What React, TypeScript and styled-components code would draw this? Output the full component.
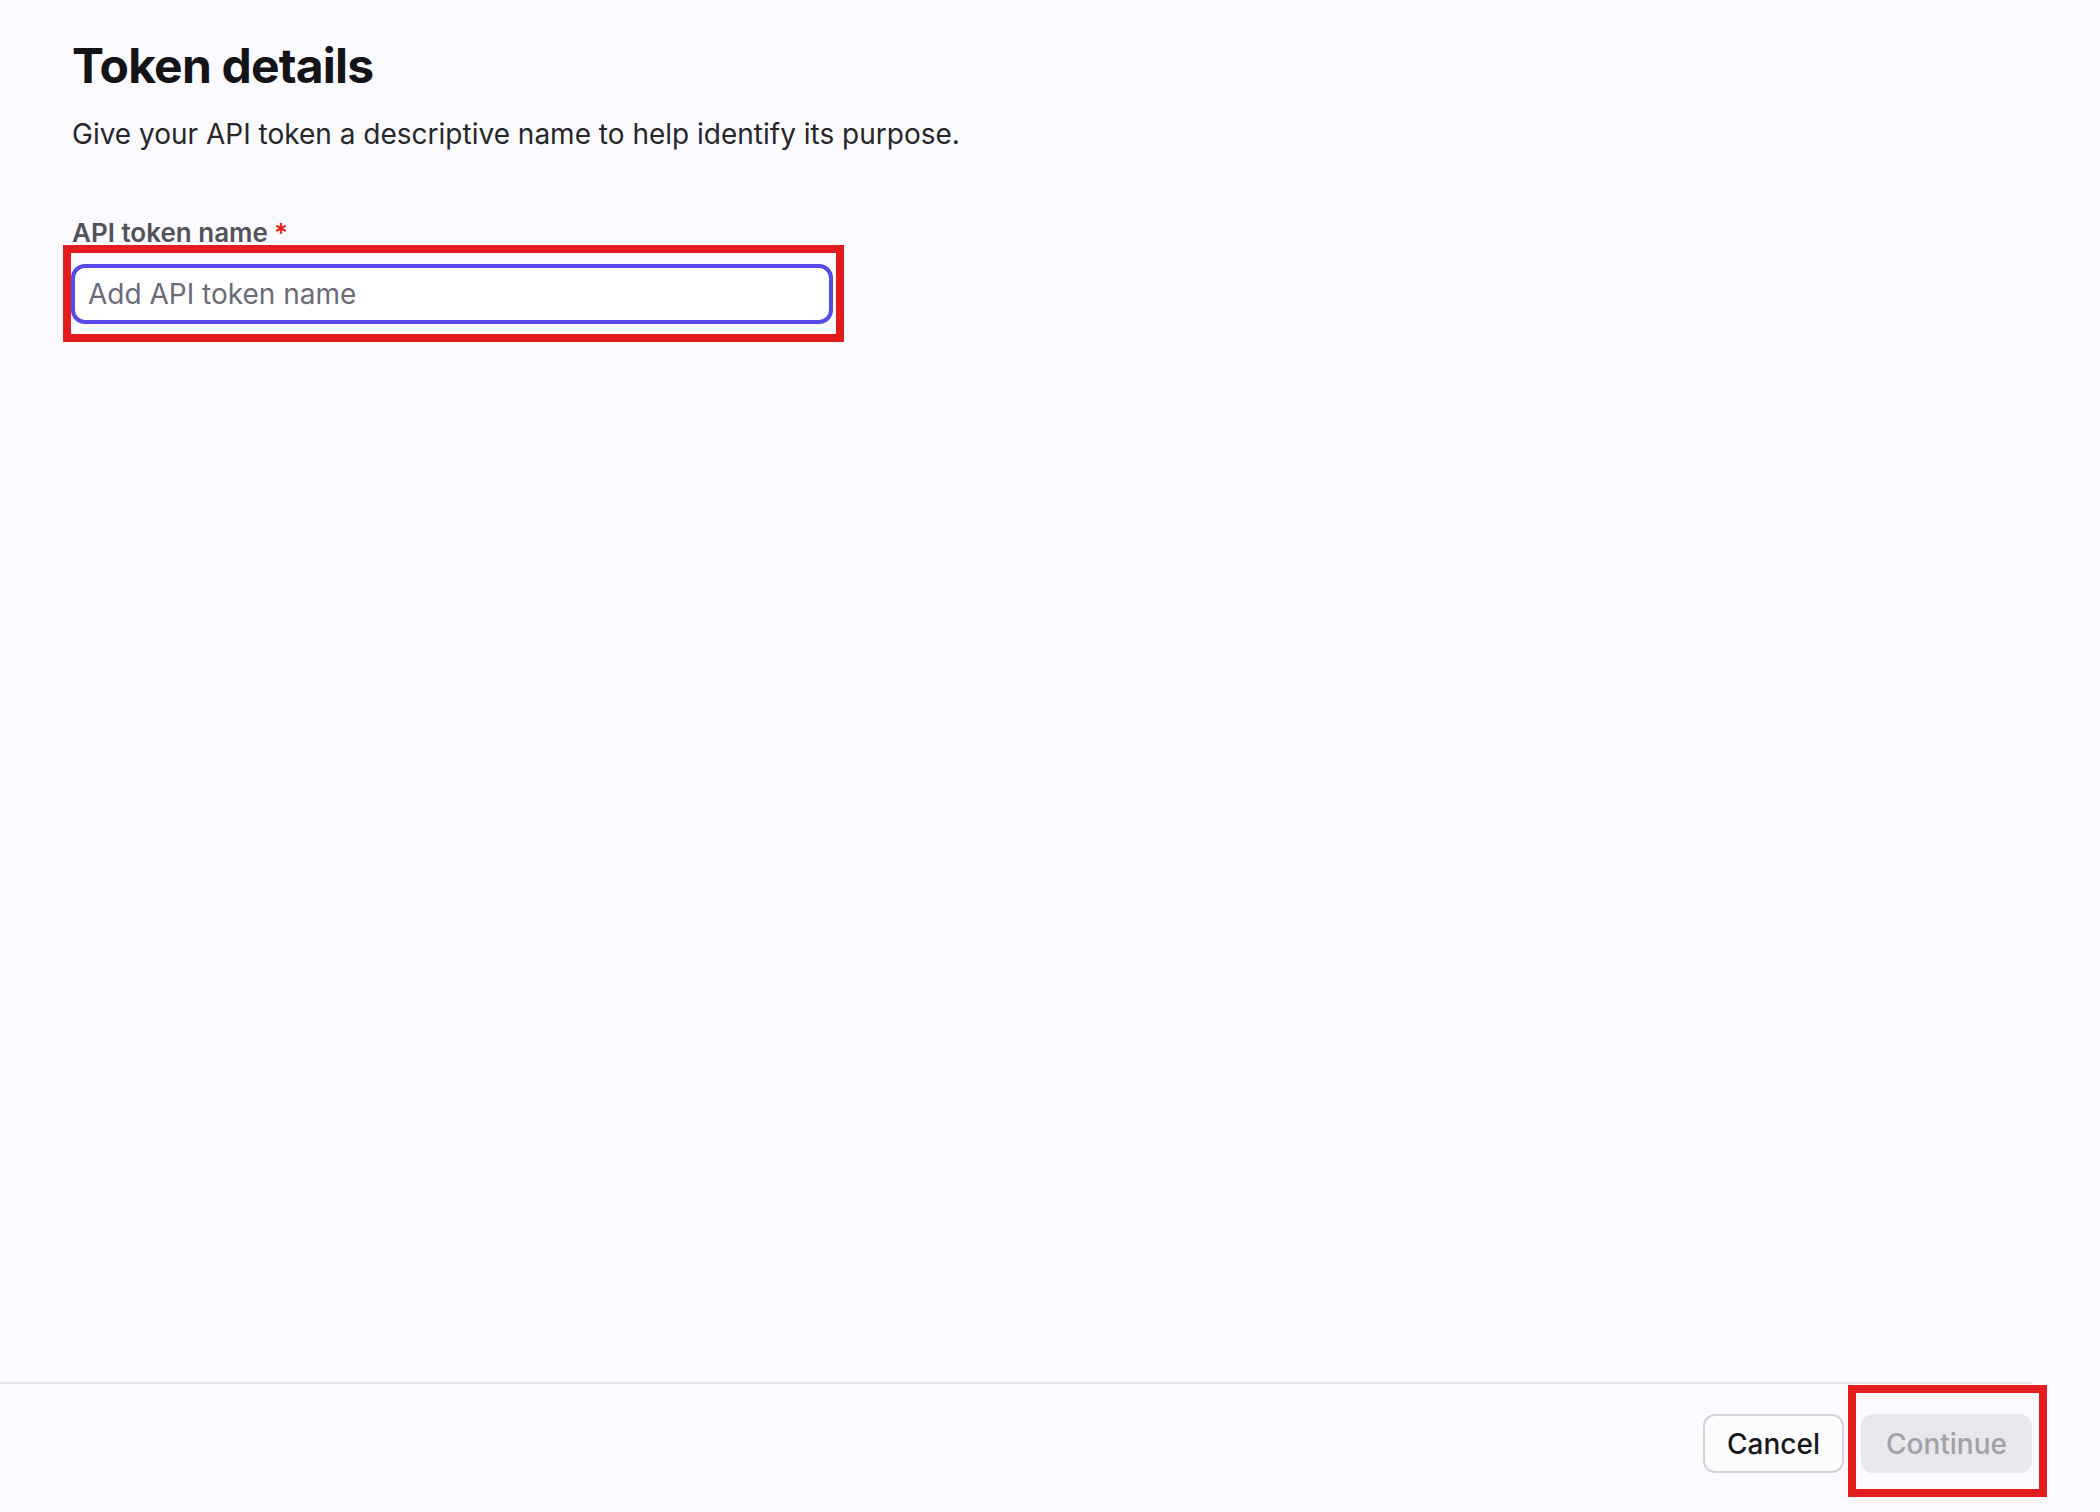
import * as React from 'react'
import styled, { createGlobalStyle } from 'styled-components'

const GlobalStyle = createGlobalStyle`
  html, body {
    margin: 0;
    padding: 0;
    background: #fafaff;
  }
  body {
    font-family: Inter, 'Noto Sans', 'Liberation Sans', sans-serif;
    color: #18181b;
  }
  * {
    box-sizing: border-box;
  }
`

const Page = styled.div`
  min-height: 100vh;
  display: flex;
  flex-direction: column;
  background: #fafaff;
`

const Main = styled.main`
  flex: 1;
  padding: 37px 72px 0;
`

const Title = styled.h1`
  margin: 0;
  font-size: 48px;
  line-height: 58px;
  font-weight: 700;
  color: #141418;
  letter-spacing: -0.8px;
`

const Description = styled.p`
  margin: 19px 0 0;
  font-size: 28px;
  line-height: 40px;
  font-weight: 400;
  color: #27272a;
`

const Field = styled.div`
  margin-top: 61px;
  display: flex;
  flex-direction: column;
  gap: 13px;
`

const Label = styled.label`
  font-size: 26px;
  line-height: 36px;
  font-weight: 600;
  color: #52525b;
`

const Required = styled.span`
  color: #e11d1d;
  margin-left: 6px;
`

const InputWrap = styled.div`
  position: relative;
  width: 762px;
  margin-left: -1px;
`

const TextInput = styled.input`
  display: block;
  width: 100%;
  height: 60px;
  padding: 0 13px;
  border: 4px solid #564be8;
  border-radius: 14px;
  background: #ffffff;
  font-family: inherit;
  font-size: 28px;
  color: #18181b;
  outline: none;

  &::placeholder {
    color: #6b6b78;
  }
`

// annotation rectangle drawn over a control
const Highlight = styled.span<{ $top: number; $right: number; $bottom: number; $left: number }>`
  position: absolute;
  top: ${({ $top }) => `-${$top}px`};
  right: ${({ $right }) => `-${$right}px`};
  bottom: ${({ $bottom }) => `-${$bottom}px`};
  left: ${({ $left }) => `-${$left}px`};
  border: 8px solid #e31c1f;
  pointer-events: none;
`

const Footer = styled.footer`
  display: flex;
  flex-direction: column;
`

const Divider = styled.div`
  height: 2px;
  margin-right: 68px;
  background: #e4e4ea;
`

const ButtonRow = styled.div`
  display: flex;
  justify-content: flex-end;
  gap: 17px;
  padding: 30px 68px 39px;
`

const Button = styled.button<{ $variant?: 'secondary' | 'disabled' }>`
  position: relative;
  height: 59px;
  padding: 0 ${({ $variant }) => ($variant === 'disabled' ? '23px' : '22px')};
  border-radius: 12px;
  font-family: inherit;
  font-size: 28px;
  font-weight: 500;
  border: ${({ $variant }) =>
    $variant === 'disabled' ? '2px solid transparent' : '2px solid #d4d4d8'};
  background: ${({ $variant }) => ($variant === 'disabled' ? '#e7e7ec' : '#fcfcfe')};
  color: ${({ $variant }) => ($variant === 'disabled' ? '#a1a1aa' : '#18181b')};
`

const ButtonSlot = styled.div`
  position: relative;
  display: flex;
`

export default function App() {
  return (
    <>
      <GlobalStyle />
      <Page>
        <Main>
          <Title>Token details</Title>
          <Description>
            Give your API token a descriptive name to help identify its purpose.
          </Description>
          <Field>
            <Label htmlFor='token-name'>
              API token name<Required>*</Required>
            </Label>
            <InputWrap>
              <TextInput id='token-name' placeholder='Add API token name' />
              <Highlight $top={19} $right={11} $bottom={18} $left={8} />
            </InputWrap>
          </Field>
        </Main>
        <Footer>
          <Divider />
          <ButtonRow>
            <Button $variant='secondary'>Cancel</Button>
            <ButtonSlot>
              <Button $variant='disabled' disabled>
                Continue
              </Button>
              <Highlight $top={29} $right={15} $bottom={24} $left={13} />
            </ButtonSlot>
          </ButtonRow>
        </Footer>
      </Page>
    </>
  )
}
